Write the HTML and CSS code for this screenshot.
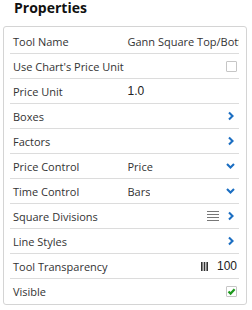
FILE: index.html
```html
<!DOCTYPE html>
<html lang="en">
  <head>
    <meta charset="UTF-8" />
    <meta name="viewport" content="width=device-width, initial-scale=1.0" />
    <title>Properties</title>
    <link rel="stylesheet" href="styles.css">
  </head>
  <body>
    <h1 class="title">Properties</h1>
    <div class="panel">
      <div class="row">
        <span class="label">Tool Name</span>
        <span class="value text">Gann Square Top/Bottom</span>
      </div>
      <div class="row">
        <span class="label">Use Chart's Price Unit</span>
        <span class="value end"><span class="checkbox"></span></span>
      </div>
      <div class="row">
        <span class="label">Price Unit</span>
        <span class="value num">1.0</span>
      </div>
      <div class="row">
        <span class="label">Boxes</span>
        <span class="value end">
          <svg class="chev" viewBox="0 0 12 12"><path d="M4 2.5 L7.5 6 L4 9.5" /></svg>
        </span>
      </div>
      <div class="row">
        <span class="label">Factors</span>
        <span class="value end">
          <svg class="chev" viewBox="0 0 12 12"><path d="M4 2.5 L7.5 6 L4 9.5" /></svg>
        </span>
      </div>
      <div class="row">
        <span class="label">Price Control</span>
        <span class="value split">
          <span class="text">Price</span>
          <svg class="chev" viewBox="0 0 12 12"><path d="M2 4 L5.5 7.5 L9 4" /></svg>
        </span>
      </div>
      <div class="row">
        <span class="label">Time Control</span>
        <span class="value split">
          <span class="text">Bars</span>
          <svg class="chev" viewBox="0 0 12 12"><path d="M2 4 L5.5 7.5 L9 4" /></svg>
        </span>
      </div>
      <div class="row">
        <span class="label">Square Divisions</span>
        <span class="value end">
          <svg class="lines" viewBox="0 0 12 10">
            <rect x="0" y="0" width="12" height="1" />
            <rect x="0" y="3" width="12" height="1" />
            <rect x="0" y="6" width="12" height="1" />
            <rect x="0" y="9" width="12" height="1" />
          </svg>
          <svg class="chev" viewBox="0 0 12 12"><path d="M4 2.5 L7.5 6 L4 9.5" /></svg>
        </span>
      </div>
      <div class="row">
        <span class="label">Line Styles</span>
        <span class="value end">
          <svg class="chev" viewBox="0 0 12 12"><path d="M4 2.5 L7.5 6 L4 9.5" /></svg>
        </span>
      </div>
      <div class="row">
        <span class="label">Tool Transparency</span>
        <span class="value end">
          <svg class="bars" viewBox="0 0 7 9">
            <rect x="0" y="0" width="1.6" height="9" />
            <rect x="2.7" y="0" width="1.6" height="9" />
            <rect x="5.4" y="0" width="1.6" height="9" />
          </svg>
          <span class="num">100</span>
        </span>
      </div>
      <div class="row">
        <span class="label">Visible</span>
        <span class="value end">
          <span class="checkbox">
            <svg viewBox="0 0 9 9"><path d="M1.5 4.5 L3.6 6.6 L7.6 2.2" /></svg>
          </span>
        </span>
      </div>
    </div>
  </body>
</html>
```

FILE: styles.css
```css
* {
  margin: 0;
  padding: 0;
  box-sizing: border-box;
}

body {
  font-family: "Open Sans", "Liberation Sans", sans-serif;
  font-size: 11px;
  color: #333;
  background: #fff;
}

.title {
  font-size: 14px;
  font-weight: 700;
  line-height: 16px;
  color: #111;
  padding-left: 14px;
  margin-bottom: 10px;
}

.panel {
  width: 244px;
  margin-left: 3px;
  border: 1px solid #d4d4d4;
  border-radius: 3px;
  padding: 2px 7px 1px 6px;
}

.row {
  display: grid;
  grid-template-columns: 1fr 1fr;
  align-items: center;
  height: 25px;
  border-bottom: 1px solid #dcdcdc;
}

.row:last-child {
  border-bottom: none;
  height: 24px;
}

.label {
  padding-left: 3px;
  white-space: nowrap;
  overflow: hidden;
}

.value {
  display: flex;
  align-items: center;
  min-width: 0;
  height: 100%;
  padding: 0 2px 0 3px;
  white-space: nowrap;
  overflow: hidden;
}

.value.end {
  justify-content: flex-end;
}

.value.split {
  justify-content: space-between;
}

.text {
  overflow: hidden;
}

.num {
  font-family: "Liberation Sans", Arial, sans-serif;
  font-size: 12px;
  color: #222;
}

.chev {
  width: 12px;
  height: 12px;
  flex-shrink: 0;
}

.chev path {
  fill: none;
  stroke: #1b6ec2;
  stroke-width: 2.1;
  stroke-linecap: butt;
  stroke-linejoin: miter;
}

.lines {
  width: 12px;
  height: 10px;
  margin-right: 6px;
  fill: #777;
}

.bars {
  width: 7px;
  height: 9px;
  margin-right: 9px;
  fill: #333;
}

.checkbox {
  display: flex;
  align-items: center;
  justify-content: center;
  width: 11px;
  height: 11px;
  border: 1px solid #c6c6c6;
  border-radius: 1px;
  background: #fff;
}

.checkbox svg {
  width: 9px;
  height: 9px;
}

.checkbox path {
  fill: none;
  stroke: #1f9a1f;
  stroke-width: 2.2;
}
```
